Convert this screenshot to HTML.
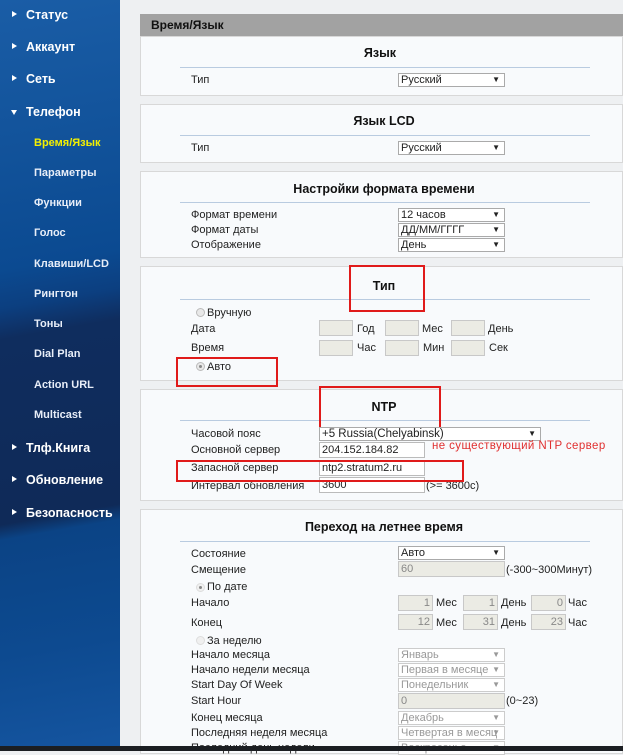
<!DOCTYPE html>
<html><head><meta charset="utf-8">
<style>
*{margin:0;padding:0;box-sizing:border-box}
body{width:623px;height:751px;overflow:hidden;background:#eef0f2;font-family:"Liberation Sans","DejaVu Sans",sans-serif;font-size:11px;color:#222;position:relative}
.a{position:absolute;white-space:nowrap}
#side{position:absolute;left:0;top:0;width:120px;height:751px;background:linear-gradient(170deg,#1a5da6 0%,#0b4a91 35%,#0c3f80 40%,#0f2d5e 44%,#0f2a58 68%,#0b4385 70%,#0d4a90 85%,#1555a0 100%)}
.m{position:absolute;left:26px;color:#fff;font-weight:bold;font-size:12.5px}
.m:before{content:"";position:absolute;left:-14px;top:3px;border-left:5px solid #fff;border-top:3.5px solid transparent;border-bottom:3.5px solid transparent}
.m.o:before{left:-15px;top:5px;border-top:5px solid #fff;border-left:3.5px solid transparent;border-right:3.5px solid transparent;border-bottom:0}
.s{position:absolute;left:34px;color:#e8eef8;font-size:11px;font-weight:bold}
.box{position:absolute;left:140px;width:483px;background:#f8fafc;border:1px solid #d8d8d8}
.t{position:absolute;font-weight:bold;font-size:12.5px;color:#111;transform:translateX(-50%)}
.ln{position:absolute;left:180px;width:410px;height:1px;background:#b9cbe0}
.sel{position:absolute;height:14px;background:#fff;border:1px solid #aaa;font-size:11px;line-height:12px;padding-left:2px}
.sel:after{content:"▼";position:absolute;right:4px;top:0;font-size:8px}
.sel.d{color:#999;border-color:#ccc}.sel.d:after{color:#999}
.in{position:absolute;height:16px;background:#fff;border:1px solid #bbb;font-size:11px;line-height:14px;padding-left:2px}
.g{background:#ebebe4;border-color:#c8c8c8;color:#888}
.r{text-align:right;padding-right:2px}
.red{position:absolute;border:2px solid #e01a1a}
.rad{position:absolute;width:9px;height:9px;border-radius:50%;border:1px solid #bbb;background:#e8e8e8}
.rad.on:after{content:"";position:absolute;left:2px;top:2px;width:3px;height:3px;border-radius:50%;background:#888}
</style></head><body>
<div id="side"></div>
<div class="m" style="top:8px">Статус</div>
<div class="m" style="top:40px">Аккаунт</div>
<div class="m" style="top:72px">Сеть</div>
<div class="m o" style="top:105px">Телефон</div>
<div class="s" style="top:137px;color:#f4f000">Время/Язык</div>
<div class="s" style="top:167px">Параметры</div>
<div class="s" style="top:197px">Функции</div>
<div class="s" style="top:227px">Голос</div>
<div class="s" style="top:258px">Клавиши/LCD</div>
<div class="s" style="top:288px">Рингтон</div>
<div class="s" style="top:318px">Тоны</div>
<div class="s" style="top:348px">Dial Plan</div>
<div class="s" style="top:379px">Action URL</div>
<div class="s" style="top:409px">Multicast</div>
<div class="m" style="top:441px">Тлф.Книга</div>
<div class="m" style="top:473px">Обновление</div>
<div class="m" style="top:506px">Безопасность</div>

<div class="a" style="left:140px;top:14px;width:483px;height:22px;background:#a2a2a2"></div>
<div class="a" style="left:151px;top:18px;font-weight:bold;font-size:12px;color:#111">Время/Язык</div>

<div class="box" style="top:36px;height:60px"></div>
<div class="t" style="left:380px;top:46px">Язык</div>
<div class="ln" style="top:67px"></div>
<div class="a" style="left:191px;top:74px">Тип</div>
<div class="sel" style="left:398px;top:73px;width:107px">Русский</div>

<div class="box" style="top:104px;height:59px"></div>
<div class="t" style="left:384px;top:114px">Язык LCD</div>
<div class="ln" style="top:135px"></div>
<div class="a" style="left:191px;top:142px">Тип</div>
<div class="sel" style="left:398px;top:141px;width:107px">Русский</div>

<div class="box" style="top:171px;height:87px"></div>
<div class="t" style="left:384px;top:182px">Настройки формата времени</div>
<div class="ln" style="top:202px"></div>
<div class="a" style="left:191px;top:209px">Формат времени</div>
<div class="a" style="left:191px;top:224px">Формат даты</div>
<div class="a" style="left:191px;top:239px">Отображение</div>
<div class="sel" style="left:398px;top:208px;width:107px">12 часов</div>
<div class="sel" style="left:398px;top:223px;width:107px">ДД/ММ/ГГГГ</div>
<div class="sel" style="left:398px;top:238px;width:107px">День</div>

<div class="box" style="top:266px;height:115px"></div>
<div class="t" style="left:384px;top:279px">Тип</div>
<div class="ln" style="top:299px"></div>
<div class="rad" style="left:196px;top:308px"></div><div class="a" style="left:207px;top:307px">Вручную</div>
<div class="a" style="left:191px;top:323px">Дата</div>
<div class="a" style="left:191px;top:342px">Время</div>
<div class="in g" style="left:319px;top:320px;width:34px"></div><div class="a" style="left:357px;top:323px">Год</div>
<div class="in g" style="left:385px;top:320px;width:34px"></div><div class="a" style="left:422px;top:323px">Мес</div>
<div class="in g" style="left:451px;top:320px;width:34px"></div><div class="a" style="left:488px;top:323px">День</div>
<div class="in g" style="left:319px;top:340px;width:34px"></div><div class="a" style="left:357px;top:342px">Час</div>
<div class="in g" style="left:385px;top:340px;width:34px"></div><div class="a" style="left:423px;top:342px">Мин</div>
<div class="in g" style="left:451px;top:340px;width:34px"></div><div class="a" style="left:489px;top:342px">Сек</div>
<div class="rad on" style="left:196px;top:362px"></div><div class="a" style="left:207px;top:361px">Авто</div>
<div class="red" style="left:349px;top:265px;width:76px;height:47px"></div>
<div class="red" style="left:176px;top:357px;width:102px;height:30px"></div>

<div class="box" style="top:389px;height:112px"></div>
<div class="t" style="left:384px;top:400px">NTP</div>
<div class="ln" style="top:420px"></div>
<div class="red" style="left:319px;top:386px;width:122px;height:43px"></div>
<div class="a" style="left:191px;top:428px">Часовой пояс</div>
<div class="a" style="left:191px;top:444px">Основной сервер</div>
<div class="a" style="left:191px;top:462px">Запасной сервер</div>
<div class="a" style="left:191px;top:480px">Интервал обновления</div>
<div class="sel" style="left:319px;top:427px;width:222px;font-size:11.5px">+5 Russia(Chelyabinsk)</div>
<div class="in" style="left:319px;top:442px;width:106px">204.152.184.82</div>
<div class="a" style="left:432px;top:440px;color:#e03030;font-size:11.5px;letter-spacing:0.4px">не существующий NTP сервер</div>
<div class="in" style="left:319px;top:460px;width:106px">ntp2.stratum2.ru</div>
<div class="in" style="left:319px;top:477px;width:106px">3600</div>
<div class="a" style="left:426px;top:480px">(&gt;= 3600с)</div>
<div class="red" style="left:176px;top:460px;width:288px;height:22px"></div>

<div class="box" style="top:509px;height:245px"></div>
<div class="t" style="left:384px;top:520px">Переход на летнее время</div>
<div class="ln" style="top:541px"></div>
<div class="a" style="left:191px;top:548px">Состояние</div>
<div class="a" style="left:191px;top:564px">Смещение</div>
<div class="rad on" style="left:196px;top:583px;border-color:#ddd;background:#f0f0f0"></div><div class="a" style="left:207px;top:581px">По дате</div>
<div class="a" style="left:191px;top:597px">Начало</div>
<div class="a" style="left:191px;top:617px">Конец</div>
<div class="rad" style="left:196px;top:636px;border-color:#ddd;background:#f0f0f0"></div><div class="a" style="left:207px;top:635px">За неделю</div>
<div class="a" style="left:191px;top:649px">Начало месяца</div>
<div class="a" style="left:191px;top:664px">Начало недели месяца</div>
<div class="a" style="left:191px;top:679px">Start Day Of Week</div>
<div class="a" style="left:191px;top:695px">Start Hour</div>
<div class="a" style="left:191px;top:712px">Конец месяца</div>
<div class="a" style="left:191px;top:727px">Последняя неделя месяца</div>
<div class="a" style="left:191px;top:742px">Последний день недели</div>
<div class="sel" style="left:398px;top:546px;width:107px">Авто</div>
<div class="in g" style="left:398px;top:561px;width:107px">60</div>
<div class="a" style="left:506px;top:564px">(-300~300Минут)</div>
<div class="in g r" style="left:398px;top:595px;width:35px">1</div><div class="a" style="left:436px;top:597px">Мес</div>
<div class="in g r" style="left:463px;top:595px;width:35px">1</div><div class="a" style="left:501px;top:597px">День</div>
<div class="in g r" style="left:531px;top:595px;width:35px">0</div><div class="a" style="left:568px;top:597px">Час</div>
<div class="in g r" style="left:398px;top:614px;width:35px">12</div><div class="a" style="left:436px;top:617px">Мес</div>
<div class="in g r" style="left:463px;top:614px;width:35px">31</div><div class="a" style="left:501px;top:617px">День</div>
<div class="in g r" style="left:531px;top:614px;width:35px">23</div><div class="a" style="left:568px;top:617px">Час</div>
<div class="sel d" style="left:398px;top:648px;width:107px">Январь</div>
<div class="sel d" style="left:398px;top:663px;width:107px">Первая в месяце</div>
<div class="sel d" style="left:398px;top:678px;width:107px">Понедельник</div>
<div class="in g" style="left:398px;top:693px;width:107px">0</div>
<div class="a" style="left:506px;top:695px">(0~23)</div>
<div class="sel d" style="left:398px;top:711px;width:107px">Декабрь</div>
<div class="sel d" style="left:398px;top:726px;width:107px;overflow:hidden">Четвертая в месяц</div>
<div class="sel d" style="left:398px;top:741px;width:107px">Воскресенье</div>

<div class="a" style="left:0;top:746px;width:623px;height:5px;background:#1b1e22"></div>
</body></html>
